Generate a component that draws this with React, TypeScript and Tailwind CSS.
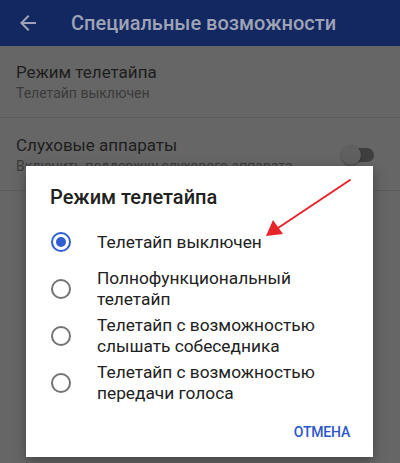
import React from 'react';

const options = [
  { id: 'off', label: ['Телетайп выключен'] },
  { id: 'full', label: ['Полнофункциональный', 'телетайп'] },
  { id: 'hco', label: ['Телетайп с возможностью', 'слышать собеседника'] },
  { id: 'vco', label: ['Телетайп с возможностью', 'передачи голоса'] },
];

const App: React.FC = () => {
  const selected = 'off';

  return (
    <div className="relative w-[400px] h-[463px] overflow-hidden bg-[#666666] font-['Roboto',sans-serif]">
      {/* Settings screen behind the dialog (dimmed) */}
      <div className="h-[46px] bg-[#132761] flex items-center">
        <svg className="w-6 h-6 ml-[16px] text-[#9ea3b5]" viewBox="0 0 24 24" fill="currentColor">
          <path d="M20 11H7.83l5.59-5.59L12 4l-8 8 8 8 1.41-1.41L7.83 13H20v-2z" />
        </svg>
        <h1 className="ml-[31px] text-[20px] font-medium text-[#9ea3b5] leading-none">Специальные возможности</h1>
      </div>

      <div className="px-4 pt-[15px] pb-[14px] border-b border-[#5c5c5c]">
        <div className="text-[17px] leading-[22px] text-[#1e1e1e]">Режим телетайпа</div>
        <div className="text-[14px] leading-[20px] text-[#3b3b3b]">Телетайп выключен</div>
      </div>

      <div className="flex items-center px-4 pt-[16px] pb-[14px] border-b border-[#5c5c5c]">
        <div className="flex-1">
          <div className="text-[17px] leading-[22px] text-[#1e1e1e]">Слуховые аппараты</div>
          <div className="text-[14px] leading-[20px] text-[#3b3b3b]">Включить поддержку слухового аппарата</div>
        </div>
        <div className="relative w-[32px] h-[14px] rounded-full bg-[#3f3f3f] mr-[10px]">
          <div className="absolute -left-[1px] -top-[3px] w-[20px] h-[20px] rounded-full bg-[#606060] shadow-[0_1px_2px_rgba(0,0,0,0.35)]" />
        </div>
      </div>

      {/* Dialog */}
      <div className="absolute left-[26px] top-[166px] w-[347px] h-[291px] bg-white shadow-[0_4px_12px_rgba(0,0,0,0.35)] flex flex-col">
        <h2 className="pl-[24px] pt-[19px] text-[20px] leading-[24px] font-medium text-[#212121]">Режим телетайпа</h2>
        <div className="mt-[12px] flex flex-col gap-[5px]">
          {options.map((o) => (
            <div key={o.id} className="flex items-center pl-[25px] min-h-[42px]">
              <span
                className={`w-[20px] h-[20px] rounded-full border-2 flex items-center justify-center shrink-0 ${
                  o.id === selected ? 'border-[#2f5fd0]' : 'border-[#737373]'
                }`}
              >
                {o.id === selected && <span className="w-[10px] h-[10px] rounded-full bg-[#2f5fd0]" />}
              </span>
              <div className="ml-[26px] text-[17.3px] leading-[21px] text-[#212121]">
                {o.label.map((l) => (
                  <div key={l}>{l}</div>
                ))}
              </div>
            </div>
          ))}
        </div>
        <div className="flex-1" />
        <div className="flex justify-end pr-[23px] pb-[14px]">
          <button className="text-[14px] font-medium text-[#2b56cc] tracking-[-0.2px]">ОТМЕНА</button>
        </div>
      </div>

      {/* Red annotation arrow */}
      <svg className="absolute left-0 top-0 pointer-events-none" width="400" height="463" viewBox="0 0 400 463">
        <line x1="350" y1="180" x2="278" y2="228" stroke="#e8232a" strokeWidth="2" strokeLinecap="round" />
        <polygon points="266,236 273,220 283,234" fill="#e8232a" />
      </svg>
    </div>
  );
};

export default App;
